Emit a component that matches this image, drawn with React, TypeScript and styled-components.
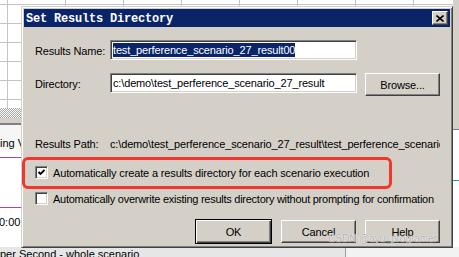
import styled, { createGlobalStyle } from 'styled-components';

const GlobalStyle = createGlobalStyle`
  html, body {
    margin: 0;
    padding: 0;
    background: #fff;
  }
  body {
    font-family: "Liberation Sans", Arial, sans-serif;
    overflow: hidden;
  }
`;

const Screen = styled.div`
  position: relative;
  width: 459px;
  height: 257px;
  overflow: hidden;
  background: #fff;
`;

/* ---- the application behind the dialog ---- */

const Backdrop = styled.div`
  display: flex;
  flex-direction: column;
  width: 459px;
  height: 257px;
  font-size: 11px;
  color: #000;
`;

const Upper = styled.div`
  display: flex;
  height: 247px;
`;

const MainColumn = styled.div`
  flex: 1;
  display: flex;
  flex-direction: column;
`;

const SheetGrid = styled.div`
  height: 108px;
  background-color: #fff;
  background-image: linear-gradient(to right, #c4c4c4 1px, transparent 1px),
    linear-gradient(to bottom, #c4c4c4 1px, transparent 1px);
  background-size: 58px 100%, 100% 19px;
  background-position: 7px 0, 0 4px;
`;

const Hatch = styled.div`
  height: 10px;
  background: repeating-conic-gradient(#a4a4a4 0 25%, #ffffff 0 50%) 0 0 / 2px 2px;
`;

const PaneHeader = styled.div`
  box-sizing: border-box;
  height: 32px;
  padding-top: 20px;
  line-height: 11px;
  white-space: nowrap;
  background: linear-gradient(#d4d0c8 0 5px, #808080 5px 7px, #f6f6f6 7px);
`;

const PaneCaption = styled.span`
  display: inline-block;
  width: 21px;
  overflow: hidden;
  vertical-align: top;
`;

const Chart = styled.div`
  flex: 1;
  display: flex;
  flex-direction: column;
  background: #fff;
`;

const SeriesLine = styled.div<{ $top: number }>`
  height: 1px;
  margin-top: ${(p) => p.$top}px;
  background: repeating-linear-gradient(to right, #8a4fd8 0 3px, #e03030 3px 4px);
`;

const TimeLabel = styled.div`
  margin-top: 9px;
  margin-left: -1px;
  line-height: 11px;
`;

const SideColumn = styled.div`
  width: 6px;
  display: flex;
  flex-direction: column;
`;

const SideTop = styled.div`
  height: 130px;
  background: linear-gradient(#d4d0c8 0 129px, #808080 129px);
`;

const SideChart = styled.div`
  flex: 1;
  background: #fff;
`;

const SideTrace = styled.div`
  height: 1px;
  margin-top: 50px;
  background: #2aa070;
`;

const StatusBar = styled.div`
  display: flex;
  height: 10px;
  overflow: hidden;
`;

const StatusCell = styled.div`
  width: 345px;
  background: #e6e6e6;
  border-right: 1px solid #9c9c9c;
  line-height: 15px;
  white-space: nowrap;
`;

const StatusRest = styled.div`
  flex: 1;
  background: #f2f2f2;
`;

/* ---- the dialog ---- */

const Dialog = styled.div`
  position: absolute;
  left: 21px;
  top: 6px;
  width: 432px;
  height: 242px;
  box-sizing: border-box;
  display: flex;
  flex-direction: column;
  padding: 2px;
  background: #d4d0c8;
  border: 1px solid;
  border-color: #d4d0c8 #404040 #404040 #d4d0c8;
  box-shadow: inset 1px 1px #ffffff, inset -1px -1px #808080;
  font-family: "Liberation Sans", Arial, sans-serif;
  font-size: 11px;
  letter-spacing: -0.15px;
  color: #000;
`;

const TitleBar = styled.div`
  display: flex;
  align-items: center;
  justify-content: space-between;
  height: 18px;
  padding: 0 2px 0 2px;
  background: #0a246a;
`;

const TitleText = styled.span`
  font-family: "Liberation Mono", "DejaVu Sans Mono", monospace;
  font-weight: bold;
  font-size: 12px;
  letter-spacing: -0.2px;
  color: #fff;
  padding-top: 1px;
`;

const CloseButton = styled.div`
  width: 16px;
  height: 14px;
  box-sizing: border-box;
  display: flex;
  align-items: center;
  justify-content: center;
  background: #d4d0c8;
  border: 1px solid;
  border-color: #ffffff #404040 #404040 #ffffff;
  box-shadow: inset -1px -1px #808080;
`;

const DialogBody = styled.div`
  flex: 1;
  display: flex;
  flex-direction: column;
  padding: 0 10px 0 11px;
`;

const FieldRow = styled.div<{ $top: number }>`
  display: flex;
  align-items: flex-start;
  margin-top: ${(p) => p.$top}px;
`;

const FieldLabel = styled.div`
  width: 75px;
  height: 20px;
  line-height: 22px;
  white-space: nowrap;
`;

const TextBox = styled.div`
  width: 247px;
  height: 20px;
  box-sizing: border-box;
  padding: 0 2px;
  line-height: 18px;
  white-space: nowrap;
  overflow: hidden;
  background: #fff;
  border: 1px solid;
  border-color: #808080 #ffffff #ffffff #808080;
  box-shadow: inset 1px 1px #404040, inset -1px -1px #d4d0c8;
`;

const Selection = styled.span`
  display: inline-block;
  line-height: 14px;
  margin-top: 2px;
  vertical-align: top;
  background: #0a246a;
  color: #fff;
`;

const PushButton = styled.div<{ $primary?: boolean }>`
  width: ${(p) => (p.$primary ? 77 : 75)}px;
  height: ${(p) => (p.$primary ? 25 : 23)}px;
  box-sizing: border-box;
  display: flex;
  align-items: center;
  justify-content: center;
  background: #d4d0c8;
  border: 1px solid;
  border-color: ${(p) => (p.$primary ? '#000 #000 #000 #000' : '#ffffff #404040 #404040 #ffffff')};
  box-shadow: ${(p) =>
    p.$primary
      ? 'inset 1px 1px #ffffff, inset -1px -1px #404040, inset -2px -2px #808080'
      : 'inset -1px -1px #808080'};
  padding-top: 1px;
`;

const BrowseButton = styled(PushButton)`
  margin-left: 8px;
`;

const PathRow = styled.div`
  display: flex;
  margin-top: 41px;
  height: 14px;
  line-height: 14px;
  white-space: nowrap;
`;

const PathLabel = styled.span`
  width: 75px;
  flex-shrink: 0;
`;

const PathValue = styled.div`
  width: 330px;
  overflow: hidden;
`;

const CheckRow = styled.div<{ $top: number }>`
  display: flex;
  align-items: center;
  gap: 5px;
  height: 13px;
  margin-top: ${(p) => p.$top}px;
  white-space: nowrap;
`;

const CheckBox = styled.div`
  width: 13px;
  height: 13px;
  flex-shrink: 0;
  box-sizing: border-box;
  display: flex;
  align-items: center;
  justify-content: center;
  background: #fff;
  border: 1px solid;
  border-color: #808080 #ffffff #ffffff #808080;
  box-shadow: inset 1px 1px #404040, inset -1px -1px #d4d0c8;
`;

const CheckText = styled.span<{ $spacing?: number }>`
  padding-top: 1px;
  letter-spacing: ${(p) => p.$spacing ?? -0.15}px;
`;

const ButtonRow = styled.div`
  display: flex;
  justify-content: flex-end;
  align-items: center;
  gap: 9px;
  margin-top: 14px;
`;

const Annotation = styled.div`
  position: absolute;
  left: 0px;
  top: 150px;
  width: 370px;
  height: 32px;
  box-sizing: border-box;
  border: 3px solid #f2352d;
  border-radius: 6px;
  pointer-events: none;
`;

const Watermark = styled.div`
  position: absolute;
  left: 328px;
  top: 233px;
  font-family: "Liberation Sans", Arial, sans-serif;
  font-size: 10px;
  color: rgba(150, 150, 150, 0.8);
  text-shadow: 0 0 1px #fff, 0 0 1px #fff;
  white-space: nowrap;
`;

const CheckMark = () => (
  <svg width="9" height="9" viewBox="0 0 9 9">
    <polyline points="1.5,4 3.5,6 7.5,2" fill="none" stroke="#000" strokeWidth="1.8" />
  </svg>
);

const CloseGlyph = () => (
  <svg width="8" height="7" viewBox="0 0 8 7">
    <path d="M0.5 0.5 L7.5 6.5 M7.5 0.5 L0.5 6.5" stroke="#000" strokeWidth="1.6" />
  </svg>
);

export default function App() {
  return (
    <Screen>
      <GlobalStyle />
      <Backdrop>
        <Upper>
          <MainColumn>
            <SheetGrid />
            <Hatch />
            <PaneHeader>
              <PaneCaption>ing Vusers</PaneCaption>
            </PaneHeader>
            <Chart>
              <SeriesLine $top={7} />
              <SeriesLine $top={49} />
              <TimeLabel>0:00</TimeLabel>
            </Chart>
          </MainColumn>
          <SideColumn>
            <SideTop />
            <SideChart>
              <SideTrace />
            </SideChart>
          </SideColumn>
        </Upper>
        <StatusBar>
          <StatusCell>per Second - whole scenario</StatusCell>
          <StatusRest />
        </StatusBar>
      </Backdrop>

      <Dialog>
        <TitleBar>
          <TitleText>Set Results Directory</TitleText>
          <CloseButton aria-label="Close">
            <CloseGlyph />
          </CloseButton>
        </TitleBar>
        <DialogBody>
          <FieldRow $top={13}>
            <FieldLabel>Results Name:</FieldLabel>
            <TextBox>
              <Selection>test_perference_scenario_27_result00</Selection>
            </TextBox>
          </FieldRow>
          <FieldRow $top={13}>
            <FieldLabel>Directory:</FieldLabel>
            <TextBox>{'c:\\demo\\test_perference_scenario_27_result'}</TextBox>
            <BrowseButton>Browse...</BrowseButton>
          </FieldRow>
          <PathRow>
            <PathLabel>Results Path:</PathLabel>
            <PathValue>{'c:\\demo\\test_perference_scenario_27_result\\test_perference_scenario_27_result00'}</PathValue>
          </PathRow>
          <CheckRow $top={15}>
            <CheckBox>
              <CheckMark />
            </CheckBox>
            <CheckText>Automatically create a results directory for each scenario execution</CheckText>
          </CheckRow>
          <CheckRow $top={13}>
            <CheckBox />
            <CheckText $spacing={-0.26}>
              Automatically overwrite existing results directory without prompting for confirmation
            </CheckText>
          </CheckRow>
          <ButtonRow>
            <PushButton $primary>OK</PushButton>
            <PushButton>Cancel</PushButton>
            <PushButton>Help</PushButton>
          </ButtonRow>
        </DialogBody>
        <Annotation />
      </Dialog>

      <Watermark>CSDN @ayu_programer</Watermark>
    </Screen>
  );
}
